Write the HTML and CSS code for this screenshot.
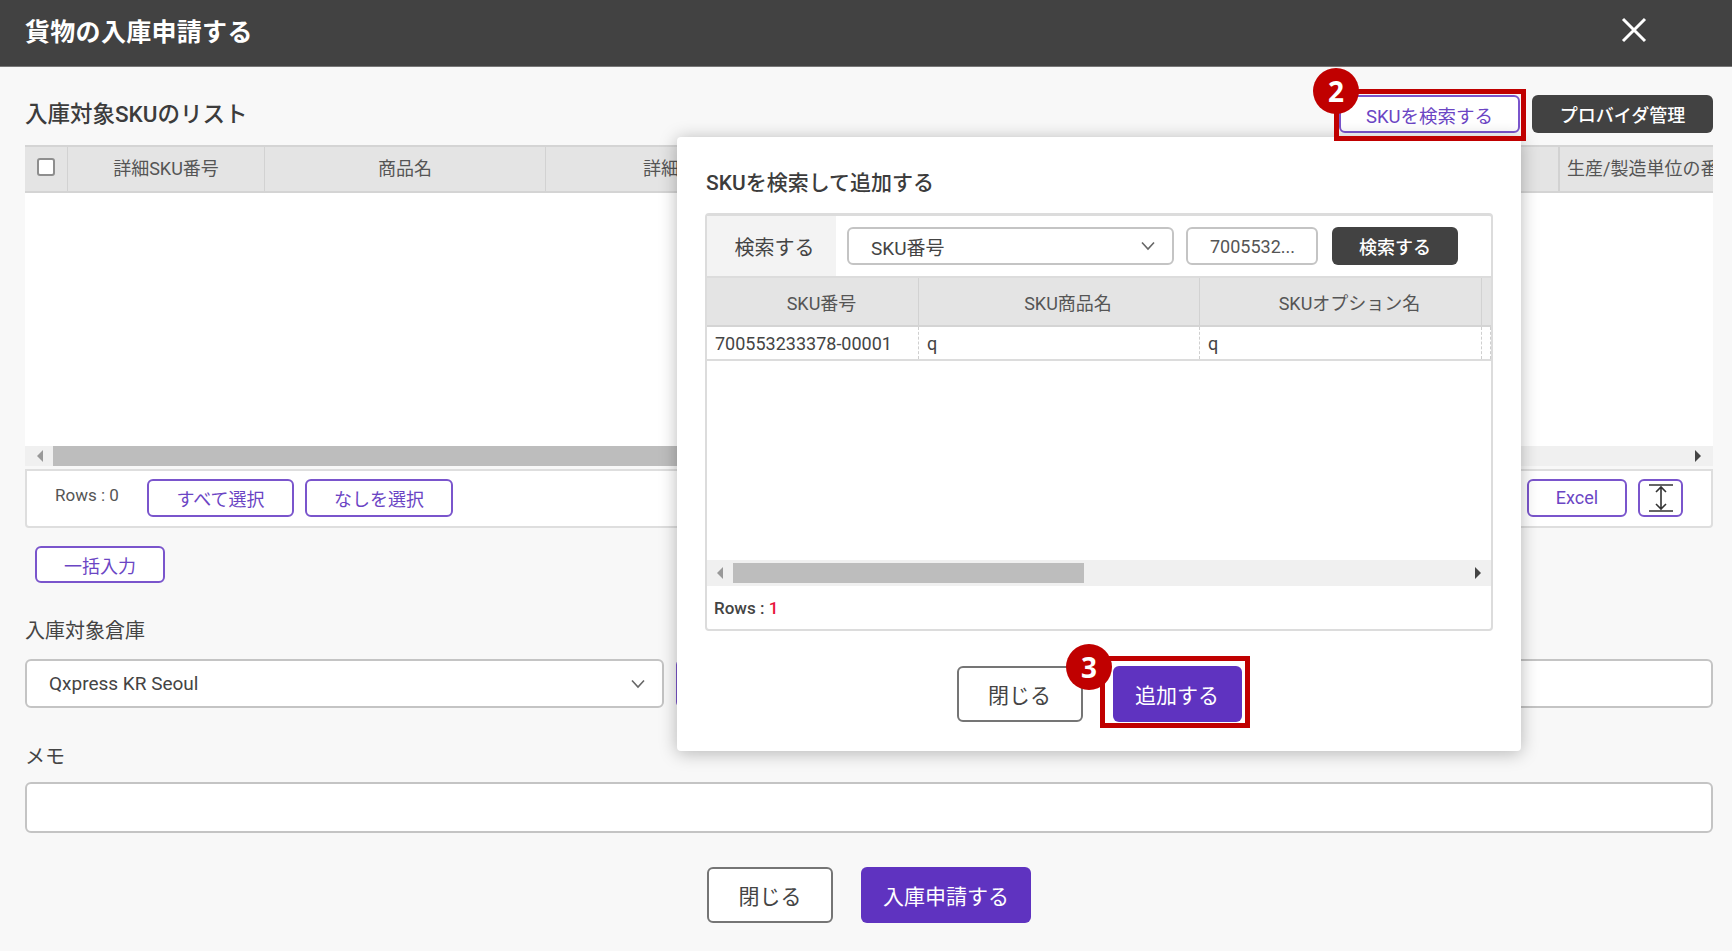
FILE: index.html
```html
<!DOCTYPE html>
<html lang="ja">
<head>
    <meta charset="UTF-8">
    <title>貨物の入庫申請する</title>
    <link rel="stylesheet" href="styles.css">
</head>
<body>
    <header class="top-bar">
        <h1>貨物の入庫申請する</h1>
        <svg class="close-icon" width="26" height="26" viewBox="0 0 26 26"><path d="M2 2 24 24M24 2 2 24" stroke="#fff" stroke-width="3" fill="none"/></svg>
    </header>

    <main class="content">
        <div class="list-head">
            <h2>入庫対象SKUのリスト</h2>
            <div class="list-actions">
                <button class="btn btn-outline btn-sku">SKUを検索する</button>
                <button class="btn btn-dark btn-provider">プロバイダ管理</button>
            </div>
        </div>

        <div class="grid">
            <div class="grid-head">
                <div class="cell cell-check"><input type="checkbox" class="check"></div>
                <div class="cell cell-sku">詳細SKU番号</div>
                <div class="cell cell-name">商品名</div>
                <div class="cell cell-rest">詳細</div>
                <div class="cell cell-last">生産/製造単位の番号</div>
            </div>
            <div class="grid-body"></div>
            <div class="scroll">
                <svg class="arrow" width="10" height="14" viewBox="0 0 10 14"><path d="M8 1 2 7l6 6z" fill="#999"/></svg>
                <div class="scroll-track"><div class="scroll-thumb thumb-main"></div></div>
                <svg class="arrow" width="10" height="14" viewBox="0 0 10 14"><path d="M2 1l6 6-6 6z" fill="#444"/></svg>
            </div>
            <div class="grid-foot">
                <span class="rows">Rows : 0</span>
                <button class="btn btn-outline btn-all">すべて選択</button>
                <button class="btn btn-outline btn-none">なしを選択</button>
                <button class="btn btn-outline btn-excel">Excel</button>
                <button class="btn btn-outline btn-fit">
                    <svg width="28" height="32" viewBox="0 0 28 32"><path d="M2 3H26M2 29H26M14 5V27M9 10l5-5 5 5M9 22l5 5 5-5" stroke="#333" stroke-width="1.6" fill="none"/></svg>
                </button>
            </div>
        </div>

        <button class="btn btn-outline btn-bulk">一括入力</button>

        <label class="field-label label-warehouse">入庫対象倉庫</label>
        <div class="field-row">
            <div class="select select-warehouse">
                <span>Qxpress KR Seoul</span>
                <svg width="16" height="10" viewBox="0 0 16 10"><path d="M2 1.500 8 8l6-6.500" stroke="#666" stroke-width="1.600" fill="none"/></svg>
            </div>
            <button class="btn btn-outline btn-address">住所</button>
            <div class="text-input"></div>
        </div>

        <label class="field-label label-memo">メモ</label>
        <div class="text-input memo"></div>

        <div class="actions">
            <button class="btn btn-light btn-large btn-close">閉じる</button>
            <button class="btn btn-primary btn-large btn-submit">入庫申請する</button>
        </div>
    </main>

    <!-- SKU search dialog -->
    <section class="dialog">
        <h3>SKUを検索して追加する</h3>
        <div class="dialog-box">
            <div class="search-row">
                <div class="search-label">検索する</div>
                <div class="select select-sku">
                    <span>SKU番号</span>
                    <svg width="16" height="10" viewBox="0 0 16 10"><path d="M2 1.500 8 8l6-6.500" stroke="#666" stroke-width="1.600" fill="none"/></svg>
                </div>
                <div class="search-input">7005532...</div>
                <button class="btn btn-dark btn-search">検索する</button>
            </div>
            <div class="result-head">
                <div class="cell col-a">SKU番号</div>
                <div class="cell col-b">SKU商品名</div>
                <div class="cell col-c">SKUオプション名</div>
                <div class="cell col-d"></div>
            </div>
            <div class="result-row">
                <div class="cell col-a">700553233378-00001</div>
                <div class="cell col-b">q</div>
                <div class="cell col-c">q</div>
                <div class="cell col-d"></div>
            </div>
            <div class="result-body"></div>
            <div class="scroll scroll-small">
                <svg class="arrow" width="10" height="14" viewBox="0 0 10 14"><path d="M8 1 2 7l6 6z" fill="#999"/></svg>
                <div class="scroll-track"><div class="scroll-thumb thumb-dialog"></div></div>
                <svg class="arrow" width="10" height="14" viewBox="0 0 10 14"><path d="M2 1l6 6-6 6z" fill="#444"/></svg>
            </div>
            <div class="result-foot">Rows : <span class="count">1</span></div>
        </div>
        <div class="dialog-actions">
            <button class="btn btn-light btn-large btn-close">閉じる</button>
            <button class="btn btn-primary btn-large btn-add">追加する</button>
        </div>
    </section>

    <!-- Manual annotations -->
    <div class="mark mark-sku"></div>
    <div class="mark mark-add"></div>
    <div class="badge badge-two">2</div>
    <div class="badge badge-three">3</div>
</body>
</html>
```
FILE: styles.css
```css
* {
    box-sizing: border-box;
}
body {
    margin: 0;
    position: relative;
    height: 951px;
    overflow: hidden;
    background-color: #f8f8f8;
    color: #444;
    font-family: Roboto, "Noto Sans CJK JP", sans-serif;
    font-size: 18px;
}
.top-bar {
    display: flex;
    justify-content: space-between;
    align-items: center;
    height: 67px;
    padding: 0 85px 7px 25px;
    background-color: #424242;
    border-bottom: 1px solid #777;
}
.top-bar h1 {
    margin: 0;
    color: #fff;
    font-size: 25px;
    font-weight: 700;
    letter-spacing: 0.3px;
}
.content {
    padding: 28px 19px 0 25px;
}
.list-head {
    display: flex;
    justify-content: space-between;
    align-items: center;
    height: 38px;
}
.list-head h2 {
    margin: 0 0 4px;
    font-size: 22.500px;
    font-weight: 500;
    color: #3c3c3c;
}
.list-actions {
    display: flex;
    gap: 12px;
    margin-bottom: 0;
}

/* Buttons */
.btn {
    display: inline-flex;
    justify-content: center;
    align-items: center;
    height: 38px;
    padding: 0;
    border-radius: 6px;
    font-family: inherit;
    font-size: 18px;
    cursor: pointer;
}
.btn-outline {
    background-color: #fff;
    border: 2px solid #7a55cc;
    color: #6b45c4;
}
.btn-dark {
    background-color: #424242;
    border: none;
    color: #fff;
    font-weight: 500;
}
.btn-light {
    background-color: #fff;
    border: 2px solid #757575;
    color: #444;
}
.btn-primary {
    background-color: #5f33c0;
    border: none;
    color: #fff;
}
.btn-large {
    height: 56px;
    font-size: 21px;
}
.btn-sku {
    width: 181px;
    padding-top: 2px;
    font-size: 18.500px;
}
.btn-provider {
    width: 181px;
}

/* Main grid */
.grid {
    margin-top: 12px;
}
.grid-head {
    display: flex;
    height: 48px;
    background-color: #e4e4e4;
    border-top: 2px solid #d4d4d4;
    border-bottom: 2px solid #d4d4d4;
    color: #555;
}
.cell {
    display: flex;
    justify-content: center;
    align-items: center;
    flex: none;
    border-right: 1px solid #d2d2d2;
    white-space: nowrap;
    overflow: hidden;
}
.grid-head .cell {
    padding-bottom: 4px;
}
.cell-check {
    width: 43px;
    align-items: flex-start;
    padding-top: 11px;
}
.check {
    appearance: none;
    width: 18px;
    height: 18px;
    margin: 0;
    background-color: #fff;
    border: 2px solid #8e8e8e;
    border-radius: 3px;
}
.cell-sku {
    width: 197px;
}
.cell-name {
    width: 281px;
}
.cell-rest {
    width: 1013px;
    justify-content: flex-start;
    padding-left: 97px;
}
.cell-last {
    width: 154px;
    justify-content: flex-start;
    padding-left: 7px;
    border-right: none;
    border-left: 1px solid #d2d2d2;
}
.grid-body {
    height: 253px;
    background-color: #fff;
}
.scroll {
    display: flex;
    align-items: center;
    height: 20px;
    background-color: #f0f0f0;
    padding: 0 10px;
}
.scroll-track {
    flex: 1;
    height: 20px;
    margin: 0 8px;
}
.scroll-thumb {
    height: 100%;
    background-color: #bdbdbd;
}
.thumb-main {
    width: 1200px;
}
.grid-foot {
    display: flex;
    align-items: center;
    height: 59px;
    margin-top: 3px;
    padding: 0 28px 2px 28px;
    background-color: #fff;
    border: 2px solid #dedede;
    border-radius: 0 0 4px 4px;
}
.rows {
    width: 92px;
    margin-bottom: 6px;
    font-size: 17px;
    color: #555;
}
.btn-all {
    width: 147px;
}
.btn-none {
    width: 148px;
    margin-left: 11px;
}
.btn-excel {
    width: 100px;
    margin-left: auto;
}
.btn-fit {
    width: 45px;
    margin-left: 11px;
}
.btn-bulk {
    display: flex;
    width: 130px;
    height: 37px;
    margin: 18px 0 0 10px;
}

/* Form fields */
.field-label {
    display: block;
    font-size: 20px;
    line-height: 28px;
    color: #444;
}
.label-warehouse {
    margin-top: 34px;
}
.label-memo {
    margin-top: 35px;
}
.field-row {
    display: flex;
    gap: 12px;
    margin-top: 14px;
}
.select {
    display: flex;
    justify-content: space-between;
    align-items: center;
    background-color: #fff;
    border: 2px solid #c4c4c4;
    border-radius: 6px;
    font-size: 19px;
}
.select-warehouse {
    width: 639px;
    height: 49px;
    padding: 0 16px 0 22px;
}
.btn-address {
    flex: none;
    width: 120px;
    height: 49px;
}
.text-input {
    flex: 1;
    height: 49px;
    background-color: #fff;
    border: 2px solid #c4c4c4;
    border-radius: 6px;
}
.memo {
    height: 51px;
    margin-top: 11px;
}
.actions {
    display: flex;
    justify-content: center;
    gap: 28px;
    margin-top: 34px;
}
.actions .btn-close {
    width: 126px;
}
.btn-submit {
    width: 170px;
}

/* Dialog over the form */
.dialog {
    position: absolute;
    left: 677px;
    top: 137px;
    width: 844px;
    height: 614px;
    padding: 29px 29px 0;
    background-color: #fff;
    border-radius: 4px;
    box-shadow: 0 2px 18px rgba(0, 0, 0, 0.28);
}
.dialog h3 {
    margin: 0;
    font-size: 21px;
    font-weight: 500;
    line-height: 34px;
    color: #3c3c3c;
}
.dialog-box {
    width: 788px;
    height: 418px;
    margin: 13px 0 0 -1px;
    border: 2px solid #dcdcdc;
    border-top-width: 3px;
    border-radius: 4px;
}
.search-row {
    display: flex;
    align-items: center;
    height: 62px;
    border-bottom: 2px solid #dcdcdc;
}
.search-label {
    display: flex;
    justify-content: center;
    align-items: center;
    width: 129px;
    height: 100%;
    padding-left: 6px;
    background-color: #f3f3f3;
    font-size: 20px;
}
.select-sku {
    width: 327px;
    height: 38px;
    margin-left: 11px;
    padding: 0 16px 0 22px;
}
.search-input {
    display: flex;
    align-items: center;
    width: 132px;
    height: 38px;
    margin-left: 12px;
    padding-left: 22px;
    background-color: #fff;
    border: 2px solid #c4c4c4;
    border-radius: 6px;
    color: #555;
}
.btn-search {
    width: 126px;
    margin-left: 14px;
}
.result-head {
    display: flex;
    height: 49px;
    background-color: #e4e4e4;
    border-bottom: 2px solid #d4d4d4;
    color: #555;
}
.result-head .cell {
    padding-left: 18px;
}
.result-head .col-d {
    padding-left: 0;
}
.result-row {
    display: flex;
    height: 34px;
    border-bottom: 2px solid #dcdcdc;
}
.result-row .cell {
    justify-content: flex-start;
    padding-left: 8px;
    border-right: 1px dashed #cfcfcf;
}
.col-a {
    width: 212px;
}
.col-b {
    width: 281px;
}
.col-c {
    width: 282px;
}
.col-d {
    width: 9px;
    border-right: none;
}
.result-body {
    height: 199px;
}
.scroll-small {
    height: 26px;
    padding: 0 8px;
}
.scroll-small .scroll-track {
    height: 20px;
}
.thumb-dialog {
    width: 351px;
}
.result-foot {
    padding: 12px 7px 0;
    font-size: 17px;
    font-weight: 500;
    color: #444;
}
.count {
    color: #e8113a;
}
.dialog-actions {
    display: flex;
    justify-content: center;
    gap: 30px;
    margin-top: 35px;
}
.dialog-actions .btn-close {
    width: 126px;
}
.btn-add {
    width: 129px;
}

/* Annotations */
.mark {
    position: absolute;
    border: 5px solid #c00000;
}
.mark-sku {
    left: 1334px;
    top: 89px;
    width: 192px;
    height: 52px;
}
.mark-add {
    left: 1100px;
    top: 656px;
    width: 150px;
    height: 72px;
}
.badge {
    position: absolute;
    width: 46px;
    height: 46px;
    border-radius: 50%;
    background-color: #c00000;
    color: #fff;
    font-family: "Open Sans", sans-serif;
    font-size: 28px;
    font-weight: 700;
    line-height: 46px;
    text-align: center;
}
.badge-two {
    left: 1313px;
    top: 68px;
}
.badge-three {
    left: 1066px;
    top: 644px;
}
```
